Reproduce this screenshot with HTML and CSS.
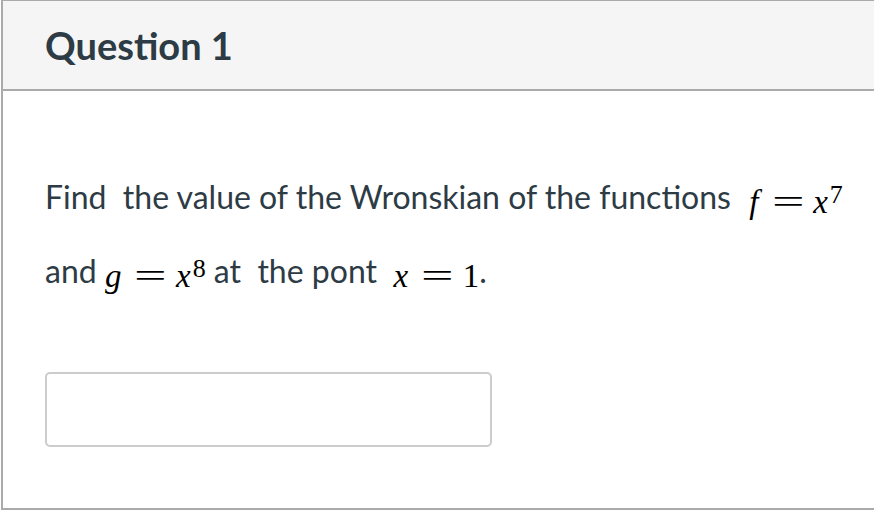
FILE: index.html
```html
<!DOCTYPE html>
<html>
<head>
<meta charset="utf-8">
<link rel="stylesheet" href="styles.css">
</head>
<body>
<div class="question">
  <div class="header"><h2 class="title">Question 1</h2></div>
  <div class="content">
    <p class="line first">Find&nbsp; the value of the Wronskian of the functions&nbsp; <span class="math"><i>f</i><span class="rel">=</span><i>x</i><sup>7</sup></span></p>
    <p class="line second">and <span class="math"><i>g</i><span class="rel">=</span><i>x</i><sup>8</sup></span> at&nbsp; the pont&nbsp; <span class="math"><i>x</i><span class="rel">=</span>1</span>.</p>
    <div class="answer"><input class="answer-input" type="text"></div>
  </div>
</div>
</body>
</html>
```
FILE: styles.css
```css
html, body { margin: 0; padding: 0; background: #fff; }
body { width: 874px; height: 510px; overflow: hidden; font-family: Lato, "Noto Sans", sans-serif; color: #2d3b45; }
.question { margin-left: 1px; border-left: 2px solid #aaa; border-top: 1px solid #aaa; border-bottom: 2px solid #aaa; height: 510px; box-sizing: border-box; display: flex; flex-direction: column; }
.header { background: #f5f5f5; border-bottom: 2px solid #aaa; height: 90px; box-sizing: border-box; padding-left: 42px; display: flex; align-items: center; }
.title { margin: 0; font-size: 38px; font-weight: 700; letter-spacing: 0; }
.content { padding-left: 42px; padding-top: 86px; }
.line { margin: 0; font-size: 32px; line-height: 40px; white-space: nowrap; }
.second { margin-top: 34px; }
.math { font-family: "Liberation Serif", serif; font-size: 33px; line-height: 1; position: relative; top: 4px; color: #000; }
.math i { font-style: italic; }
.first .math { margin-left: 2px; }
.rel { display: inline-block; margin: 0 16px 0 20px; transform: scaleX(1.75); }
.math sup { font-size: 26px; vertical-align: 10px; line-height: 0; margin-left: 2px; }
.answer { margin-top: 81px; }
.answer-input { width: 447px; height: 75px; box-sizing: border-box; border: 2px solid #ccc; border-radius: 5px; background: #fff; display: block; margin: 0; }
```
